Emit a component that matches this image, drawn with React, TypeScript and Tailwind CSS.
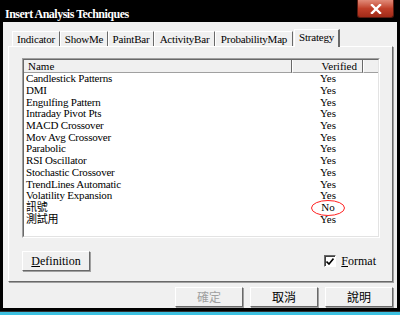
const SERIF = "font-['Liberation_Serif','Noto_Sans_CJK_TC',serif]"

const TABS: [string, string][] = [
  ['Indicator', 'w-[48px]'],
  ['ShowMe', 'w-[48px]'],
  ['PaintBar', 'w-[46px]'],
  ['ActivityBar', 'w-[61px]'],
  ['ProbabilityMap', 'w-[78px]'],
]

const ROWS: [string, string][] = [
  ['Candlestick Patterns', 'Yes'],
  ['DMI', 'Yes'],
  ['Engulfing Pattern', 'Yes'],
  ['Intraday Pivot Pts', 'Yes'],
  ['MACD Crossover', 'Yes'],
  ['Mov Avg Crossover', 'Yes'],
  ['Parabolic', 'Yes'],
  ['RSI Oscillator', 'Yes'],
  ['Stochastic Crossover', 'Yes'],
  ['TrendLines Automatic', 'Yes'],
  ['Volatility Expansion', 'Yes'],
  ['訊號', 'No'],
  ['測試用', 'Yes'],
]

function WinButton({ label, disabled, w = 'w-[68px]' }: { label: React.ReactNode; disabled?: boolean; w?: string }) {
  return (
    <div
      className={`${w} h-[20px] flex items-center justify-center bg-[#f0f0f0] border border-t-white border-l-white border-r-[#696969] border-b-[#696969] shadow-[1px_1px_0_#a0a0a0] text-[12px] ${disabled ? 'text-[#a0a0a0]' : 'text-black'}`}
    >
      {label}
    </div>
  )
}

export default function App() {
  return (
    <div className={`w-[400px] h-[315px] bg-black flex flex-col overflow-hidden ${SERIF}`}>
      {/* Title bar */}
      <div className="h-[22px] shrink-0 flex items-start justify-between pl-[5px] pr-[6px]">
        <span className="mt-[5px] text-white text-[12px] font-bold tracking-[-0.5px]">Insert Analysis Techniques</span>
        <div className="w-[37px] h-[18px] rounded-b-[3px] bg-gradient-to-b from-[#e08a78] via-[#c0402a] to-[#a02a18] border border-[#5a1a10] border-t-0 flex items-center justify-center">
          <svg width="12" height="10" viewBox="0 0 12 10">
            <path d="M2 1 L10 9 M10 1 L2 9" stroke="#fff" strokeWidth="2.4" strokeLinecap="square" />
          </svg>
        </div>
      </div>

      {/* Body */}
      <div className="flex-1 ml-[3px] mr-[3px] bg-[#f0f0f0] flex flex-col pt-[7px] pl-[5px] pr-[4px]">
        {/* Tab strip */}
        <div className="h-[17px] flex items-end pl-[4px] text-[11px] leading-none tracking-[-0.2px]">
          {TABS.map(([t, w]) => (
            <div key={t} className={`${w} h-[15px] flex items-center justify-center border-t border-l border-white border-r border-r-[#696969] whitespace-nowrap`}>
              {t}
            </div>
          ))}
          <div className="w-[46px] h-[18px] ml-[1px] flex items-center justify-center border-t border-l border-white border-r-2 border-r-[#696969] bg-[#f0f0f0] relative top-[1px] z-10 pb-[2px]">
            Strategy
          </div>
        </div>

        {/* Tab panel */}
        <div className="h-[236px] border border-t-white border-l-white border-r-[#696969] border-b-[#696969] shadow-[1px_1px_0_#a0a0a0] flex flex-col px-[13px] pt-[11px]">
          {/* List box */}
          <div className="w-[358px] h-[180px] border border-t-[#a0a0a0] border-l-[#a0a0a0] border-r-white border-b-white bg-white flex flex-col">
            <div className="border border-t-[#696969] border-l-[#696969] border-r-[#e3e3e3] border-b-[#e3e3e3] flex-1 flex flex-col overflow-hidden">
              <div className="h-[13px] flex text-[11px] leading-[13px] bg-[#f0f0f0]">
                <div className="w-[268px] pl-[4px] border-r border-r-[#696969] border-b border-b-[#a0a0a0]">Name</div>
                <div className="w-[71px] pr-[5px] text-right border-l border-white border-r border-r-[#696969] border-b border-b-[#a0a0a0]">Verified</div>
                <div className="flex-1 border-l border-white border-b border-b-[#a0a0a0]" />
              </div>
              <div className="flex flex-col text-[11px]">
                {ROWS.map(([name, v]) => (
                  <div key={name} className="h-[11.7px] flex items-center leading-none">
                    <div className="w-[268px] pl-[2px] tracking-[-0.2px]">{name}</div>
                    <div className="w-[72px] flex justify-center relative">
                      {v}
                      {v === 'No' && (
                        <svg className="absolute left-[18px] -top-[3px]" width="36" height="18" viewBox="0 0 36 18">
                          <ellipse cx="18" cy="9" rx="16.5" ry="7.5" fill="none" stroke="#ff2020" strokeWidth="1" />
                        </svg>
                      )}
                    </div>
                  </div>
                ))}
              </div>
            </div>
          </div>

          {/* Definition + Format */}
          <div className="flex items-center justify-between mt-[13px] pr-[2px]">
            <WinButton label={<span><span className="underline">D</span>efinition</span>} />
            <div className="flex items-center gap-[5px] text-[12px] mr-[1px]">
              <div className="w-[12px] h-[12px] bg-white border border-t-[#696969] border-l-[#696969] border-r-white border-b-white shadow-[inset_1px_1px_0_#404040] flex items-center justify-center">
                <svg width="8" height="7" viewBox="0 0 8 7">
                  <path d="M0.5 3.5 L3 6 L7.5 0.5" stroke="#000" strokeWidth="1.6" fill="none" />
                </svg>
              </div>
              <span><span className="underline">F</span>ormat</span>
            </div>
          </div>
        </div>

        {/* Dialog buttons */}
        <div className="flex justify-end gap-[7px] mt-[5px] font-['Noto_Sans_CJK_TC',sans-serif]">
          <WinButton label="確定" disabled />
          <WinButton label="取消" />
          <WinButton label="說明" />
        </div>
      </div>
      <div className="h-[1px] shrink-0 mt-[3px] bg-[#303030]" />
      <div className="h-[3px] shrink-0 bg-[#3cc0e0]" />
    </div>
  )
}
